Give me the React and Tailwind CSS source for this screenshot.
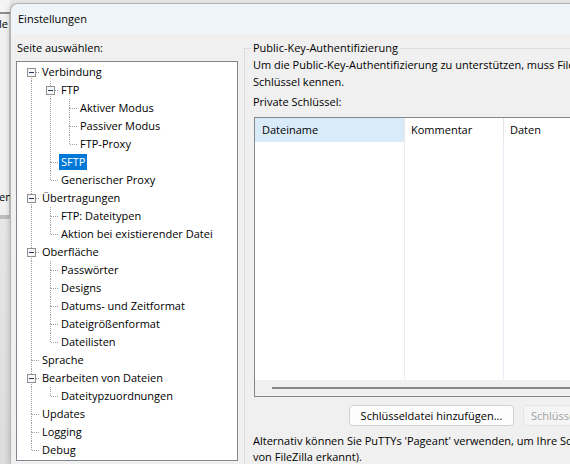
import React from "react";

const tree = [
  {
    label: "Verbindung",
    children: [
      {
        label: "FTP",
        children: [{ label: "Aktiver Modus" }, { label: "Passiver Modus" }, { label: "FTP-Proxy" }],
      },
      { label: "SFTP", selected: true },
      { label: "Generischer Proxy" },
    ],
  },
  {
    label: "Übertragungen",
    children: [{ label: "FTP: Dateitypen" }, { label: "Aktion bei existierender Datei" }],
  },
  {
    label: "Oberfläche",
    children: [
      { label: "Passwörter" },
      { label: "Designs" },
      { label: "Datums- und Zeitformat" },
      { label: "Dateigrößenformat" },
      { label: "Dateilisten" },
    ],
  },
  { label: "Sprache" },
  { label: "Bearbeiten von Dateien", children: [{ label: "Dateitypzuordnungen" }] },
  { label: "Updates" },
  { label: "Logging" },
  { label: "Debug" },
];

function flatten(nodes, depth = 0, guides = [], out = []) {
  nodes.forEach((node, i) => {
    const first = i === 0;
    const last = i === nodes.length - 1;
    out.push({ ...node, depth, guides, first, last, hasChildren: !!node.children });
    if (node.children) flatten(node.children, depth + 1, [...guides, !last], out);
  });
  return out;
}

const rows = flatten(tree);
const dot = "#a0a0a0";

function Cell({ pipe, own, top, bottom, box }) {
  return (
    <svg width="19" height="18" className="shrink-0" shapeRendering="crispEdges">
      {pipe ? <line x1="10.5" y1="0" x2="10.5" y2="18" stroke={dot} strokeDasharray="1 1" /> : null}
      {own && top ? <line x1="10.5" y1="0" x2="10.5" y2="9" stroke={dot} strokeDasharray="1 1" /> : null}
      {own && bottom ? <line x1="10.5" y1="9" x2="10.5" y2="18" stroke={dot} strokeDasharray="1 1" /> : null}
      {own ? <line x1="11" y1="9.5" x2="19" y2="9.5" stroke={dot} strokeDasharray="1 1" /> : null}
      {box ? (
        <g>
          <rect x="6.5" y="5.5" width="8" height="8" fill="#f7f7f7" stroke="#919191" />
          <line x1="8" y1="9.5" x2="13" y2="9.5" stroke="#1f3a5a" />
        </g>
      ) : null}
    </svg>
  );
}

function TreeRow({ row }) {
  return (
    <div className="flex h-[18px] items-center">
      {row.guides.map((g, i) => (
        <Cell key={i} pipe={g} />
      ))}
      <Cell own top={!(row.depth === 0 && row.first)} bottom={!row.last} box={row.hasChildren} />
      <span
        className={`h-[16px] whitespace-nowrap px-[2px] leading-[16px] ${
          row.selected ? "bg-[#0078d7] text-white" : ""
        }`}
      >
        {row.label}
      </span>
    </div>
  );
}

function BackWindow() {
  return (
    <div className="flex w-[10px] shrink-0 flex-col overflow-hidden text-black">
      <div className="h-[12px] bg-[#f4f4f4]" />
      <div className="h-[2px] bg-[#8c8c8c]" />
      <div className="flex h-[201px] flex-col border-r border-[#c8c8c8] bg-[#f0f0f0]">
        <div className="mt-[2px] -ml-[1px] leading-[16px]">le</div>
        <div className="mt-[157px] -ml-[1px] leading-[16px]">en</div>
      </div>
      <div className="h-[4px] bg-[#bdbdbd]" />
      <div className="flex-1 bg-gradient-to-b from-[#e6e6e6] to-[#dcdcdc]" />
    </div>
  );
}

export default function App() {
  return (
    <div className="flex h-[464px] w-[570px] overflow-hidden bg-[#e9e9e9] font-['Open_Sans',sans-serif] text-[11px] text-black">
      <BackWindow />
      <div className="mt-[3px] flex w-[640px] shrink-0 flex-col rounded-tl-[8px] border-l border-t border-[#b4b4b4] bg-[#f0f0f0] shadow-[-2px_0_4px_rgba(0,0,0,0.12)]">
        <div className="flex h-[30px] shrink-0 items-center rounded-tl-[8px] bg-[#eff4f9] pl-[7px] leading-[16px]">
          Einstellungen
        </div>
        <div className="flex pl-[5px] pt-[6px]">
          <div className="flex w-[222px] shrink-0 flex-col">
            <div className="pl-[1px] leading-[16px]">Seite auswählen:</div>
            <div className="mt-[5px] border border-[#828790] bg-white pb-[1px] pl-[4px] pt-[1px]">
              {rows.map((row) => (
                <TreeRow key={row.label} row={row} />
              ))}
            </div>
          </div>
          <fieldset className="ml-[6px] w-[400px] shrink-0 border-l border-t border-[#dcdcdc] pl-[8px]">
            <legend className="-ml-[2px] px-[2px] leading-[16px]">Public-Key-Authentifizierung</legend>
            <p className="whitespace-nowrap leading-[17px]">
              Um die Public-Key-Authentifizierung zu unterstützen, muss FileZilla Ihre privaten
              <br />
              Schlüssel kennen.
            </p>
            <p className="mt-[4px] leading-[16px]">Private Schlüssel:</p>
            <div className="ml-[1px] mt-[7px] flex h-[280px] flex-col border border-[#828790] bg-white">
              <div className="flex h-[24px] shrink-0 items-center">
                <div className="flex h-full w-[150px] items-center border-r border-[#e5e5e5] bg-[#d9ebf9] pl-[7px]">
                  Dateiname
                </div>
                <div className="flex h-full w-[99px] items-center border-r border-[#e5e5e5] pl-[6px]">
                  Kommentar
                </div>
                <div className="flex h-full items-center pl-[6px]">Daten</div>
              </div>
              <div className="flex flex-1">
                <div className="w-[150px] border-r border-[#e8eef7]" />
                <div className="w-[99px] border-r border-[#e8eef7]" />
              </div>
              <div className="flex h-[16px] shrink-0 items-center bg-[#f0f0f0] pl-[17px]">
                <div className="h-[2px] flex-1 bg-[#858585]" />
              </div>
            </div>
            <div className="mt-[8px] flex items-center">
              <button
                type="button"
                className="ml-[96px] h-[21px] w-[165px] rounded-[4px] border border-[#d0d0d0] bg-[#fdfdfd] leading-[16px]"
              >
                Schlüsseldatei hinzufügen...
              </button>
              <button
                type="button"
                className="ml-[9px] h-[21px] w-[150px] rounded-[4px] border border-[#e5e5e5] bg-[#f5f5f5] text-left pl-[7px] leading-[16px] text-[#a0a0a0]"
              >
                Schlüsseldatei entfernen
              </button>
            </div>
            <p className="mt-[7px] whitespace-nowrap leading-[16px]">
              Alternativ können Sie PuTTYs 'Pageant' verwenden, um Ihre Schlüssel zu verwalten (diese werden automatisch
              <br />
              von FileZilla erkannt).
            </p>
          </fieldset>
        </div>
      </div>
    </div>
  );
}
